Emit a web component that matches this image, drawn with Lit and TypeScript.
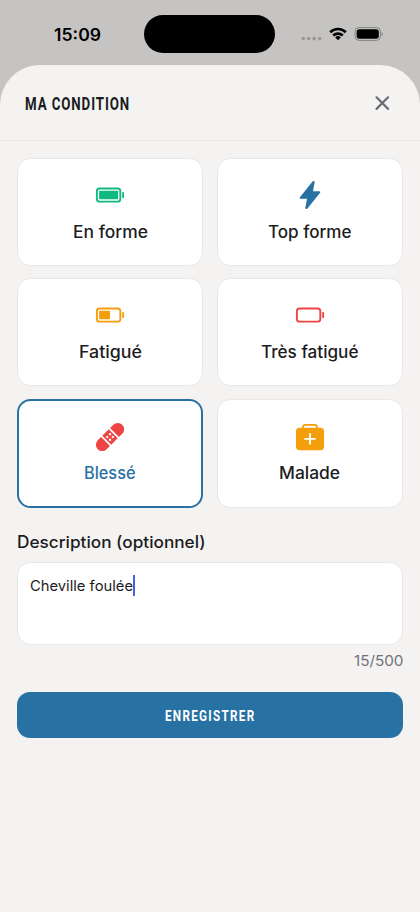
import { LitElement, html, css, svg } from "lit";
import { customElement, property, state } from "lit/decorators.js";
import { classMap } from "lit/directives/class-map.js";

/** One line of text set to a fixed measure; the baseline sits at `base`. */
@customElement("fit-text")
class FitText extends LitElement {
  @property() text = "";
  @property({ type: Number }) w = 100;
  @property({ type: Number }) h = 20;
  @property({ type: Number }) base = 16;
  static styles = css`
    :host { display: block; flex: none; }
    svg { display: block; overflow: visible; }
    text { fill: currentColor; }
  `;
  render() {
    return html`<svg width=${this.w} height=${this.h}>
      <text x="0" y=${this.base} textLength=${this.w} lengthAdjust="spacingAndGlyphs">${this.text}</text>
    </svg>`;
  }
}

const battery = (fill: number) => svg`
  <rect x="32" y="144" width="400" height="224" rx="45.7" fill="none" stroke="currentColor" stroke-width="32"/>
  ${fill ? svg`<rect x="70" y="183" width=${fill} height="146" rx="8" fill="currentColor"/>` : ""}
  <path d="M480 218.7v74.6" fill="none" stroke="currentColor" stroke-width="32" stroke-linecap="round"/>`;

const icons: Record<string, unknown> = {
  full: battery(324),
  half: battery(186),
  dead: battery(0),
  flash: svg`<path fill="currentColor" d="M194.82 496a18.36 18.36 0 01-18.1-21.53v-.11L204.83 320H96a16 16 0 01-12.44-26.06L302.73 23a18.45 18.45 0 0132.8 13.71c0 .3-.08.59-.13.89L307.19 192H416a16 16 0 0112.44 26.06L209.24 489a18.45 18.45 0 01-14.42 7z"/>`,
  bandage: svg`<g transform="rotate(-45 256 256)" fill="currentColor">
    <path d="M148 148H68a108 108 0 000 216h80zM364 148h80a108 108 0 010 216h-80z"/>
    <rect x="178" y="148" width="156" height="216"/>
    <g fill="#fff"><circle cx="222" cy="222" r="20"/><circle cx="290" cy="222" r="20"/><circle cx="222" cy="290" r="20"/><circle cx="290" cy="290" r="20"/></g>
  </g>`,
  medkit: svg`<path d="M138 104V88a40 40 0 0140-40h156a40 40 0 0140 40v16" fill="none" stroke="currentColor" stroke-width="32"/>
    <rect x="16" y="96" width="480" height="384" rx="62" fill="currentColor"/>
    <path d="M256 205v166M339 288H173" stroke="#fff" stroke-width="34" stroke-linecap="round"/>`,
};

interface Condition { id: string; label: string; w: number; icon: string; tone: string; }

const conditions: Condition[] = [
  { id: "fit", label: "En forme", w: 75, icon: "full", tone: "green" },
  { id: "top", label: "Top forme", w: 83.5, icon: "flash", tone: "blue" },
  { id: "tired", label: "Fatigué", w: 63, icon: "half", tone: "amber" },
  { id: "exhausted", label: "Très fatigué", w: 97.5, icon: "dead", tone: "red" },
  { id: "injured", label: "Blessé", w: 51.5, icon: "bandage", tone: "red" },
  { id: "sick", label: "Malade", w: 61, icon: "medkit", tone: "amber" },
];

@customElement("app-root")
class AppRoot extends LitElement {
  @state() selected = "injured";

  static styles = css`
    :host {
      display: flex; flex-direction: column; height: 912px; overflow: hidden;
      background: #c5c4c2; color: #1c1c1e;
      font-family: Inter, "Open Sans", sans-serif;
    }
    * { box-sizing: border-box; }
    button { font: inherit; color: inherit; cursor: pointer; }
    .status { height: 65px; flex: none; display: flex; align-items: flex-start; color: #000; }
    .time { margin: 23.5px 43.4px 0 54px; font-size: 17px; font-weight: 600; }
    .island { width: 131px; height: 38.5px; margin-top: 14.5px; border-radius: 20px; background: #000; }
    .signals { margin: 26px 0 0 25.5px; }
    .sheet { flex: 1; background: #f4f3f1; border-radius: 40px 40px 0 0; }
    .head {
      height: 76px; padding: 1px 29px 0 25px; display: flex; align-items: center; justify-content: space-between;
      border-bottom: 1px solid #e8e7e6;
    }
    .title {
      font-family: "Roboto", sans-serif; font-size: 18px; font-weight: 700; letter-spacing: 1.2px;
      -webkit-text-stroke: .45px currentColor;
    }
    .close { border: 0; padding: 0; background: none; color: #6b6d78; display: block; }
    .close svg { display: block; }
    .body { padding: 17px 17px 0; }
    .grid { display: grid; grid-template-columns: 1fr 1fr; grid-template-rows: 107.5px 107.5px 109px; gap: 12.9px 13.6px; }
    .card {
      border: 1px solid #e7e7e8; border-radius: 13.5px; background: #fff; padding: 21px 0 0;
      display: flex; flex-direction: column; align-items: center; gap: 11px;
      font-size: 16.8px; font-weight: 500; -webkit-text-stroke: .2px currentColor;
    }
    .card.on { border: 2px solid #2872a3; color: #2872a3; }
    .card.last { padding-top: 22px; gap: 10.3px; }
    .card.last.on { padding-top: 21px; }
    .icon { width: 30px; height: 30px; display: block; -webkit-text-stroke: 0; }
    .green { color: #10b981; }
    .blue { color: #2872a3; }
    .amber { color: #f59e0b; }
    .red { color: #ef4444; }
    .label { font-size: 16.6px; font-weight: 500; margin: 24.4px 0 10.2px; -webkit-text-stroke: .2px currentColor; }
    .field {
      height: 83px; border: 1px solid #e7e7e8; border-radius: 13.5px; background: #fff;
      padding: 11.5px 0 0 12px; display: flex; align-items: flex-start; font-size: 14.3px;
    }
    .caret { width: 2px; height: 21px; background: #4a64d8; }
    .count { display: flex; justify-content: flex-end; margin-top: 6px; font-size: 14.3px; color: #71737b; }
    .save {
      width: 100%; height: 46px; margin-top: 20.3px; border: 0; border-radius: 13px; padding: 0; background: #2872a3; color: #fff;
      display: flex; align-items: center; justify-content: center;
      font-family: Roboto, sans-serif; font-size: 15.5px; font-weight: 700; letter-spacing: 1.7px;
      -webkit-text-stroke: .25px currentColor;
    }
  `;

  render() {
    return html`
      <div class="status">
        <div class="time"><fit-text text="15:09" w="47" h="22" base="16.5"></fit-text></div>
        <div class="island"></div>
        <svg class="signals" width="84" height="17" viewBox="301 26 84 17">
          <g fill="#989795"><circle cx="303.2" cy="38.6" r="1.8"/><circle cx="308.7" cy="38.6" r="1.8"/><circle cx="314.2" cy="38.6" r="1.8"/><circle cx="319.7" cy="38.6" r="1.8"/></g>
          <g fill="none" stroke="#000" stroke-width="2.6"><path d="M330.2 32.2a11.2 11.2 0 0115.6 0M333.2 35.5a7.1 7.1 0 019.6 0"/></g>
          <path d="M335.2 37.4a4 4 0 015.6 0L338 40.3z"/>
          <rect x="355" y="27.6" width="25.4" height="12.8" rx="4" fill="none" stroke="#83827f"/>
          <rect x="356.6" y="29.2" width="22.2" height="9.6" rx="2.7"/>
          <path d="M381.5 32v4a2.2 2.2 0 000-4z" fill="#83827f"/>
        </svg>
      </div>
      <div class="sheet">
        <div class="head">
          <fit-text class="title" text="MA CONDITION" w="105" h="20" base="16.7"></fit-text>
          <button class="close" aria-label="Fermer">
            <svg width="17" height="17" viewBox="0 0 17 17"><path d="M2.5 2.3l11.6 11.6M14.1 2.3L2.5 13.9" stroke="currentColor" stroke-width="2.2" stroke-linecap="round"/></svg>
          </button>
        </div>
        <div class="body">
          <div class="grid">
            ${conditions.map((c, i) => html`
              <button class=${classMap({ card: true, on: c.id === this.selected, last: i > 3 })} @click=${() => (this.selected = c.id)}>
                <svg class="icon ${c.tone}" viewBox="0 0 512 512">${icons[c.icon]}</svg>
                <fit-text text=${c.label} .w=${c.w} h="22" base="17"></fit-text>
              </button>`)}
          </div>
          <fit-text class="label" text="Description (optionnel)" w="188.5" h="20" base="16.2"></fit-text>
          <div class="field">
            <fit-text text="Cheville foulée" w="103" h="20" base="15.8"></fit-text>
            <div class="caret"></div>
          </div>
          <div class="count"><fit-text text="15/500" w="49.5" h="20" base="14.8"></fit-text></div>
          <button class="save"><fit-text text="ENREGISTRER" w="90.5" h="20" base="15.8"></fit-text></button>
        </div>
      </div>`;
  }
}
